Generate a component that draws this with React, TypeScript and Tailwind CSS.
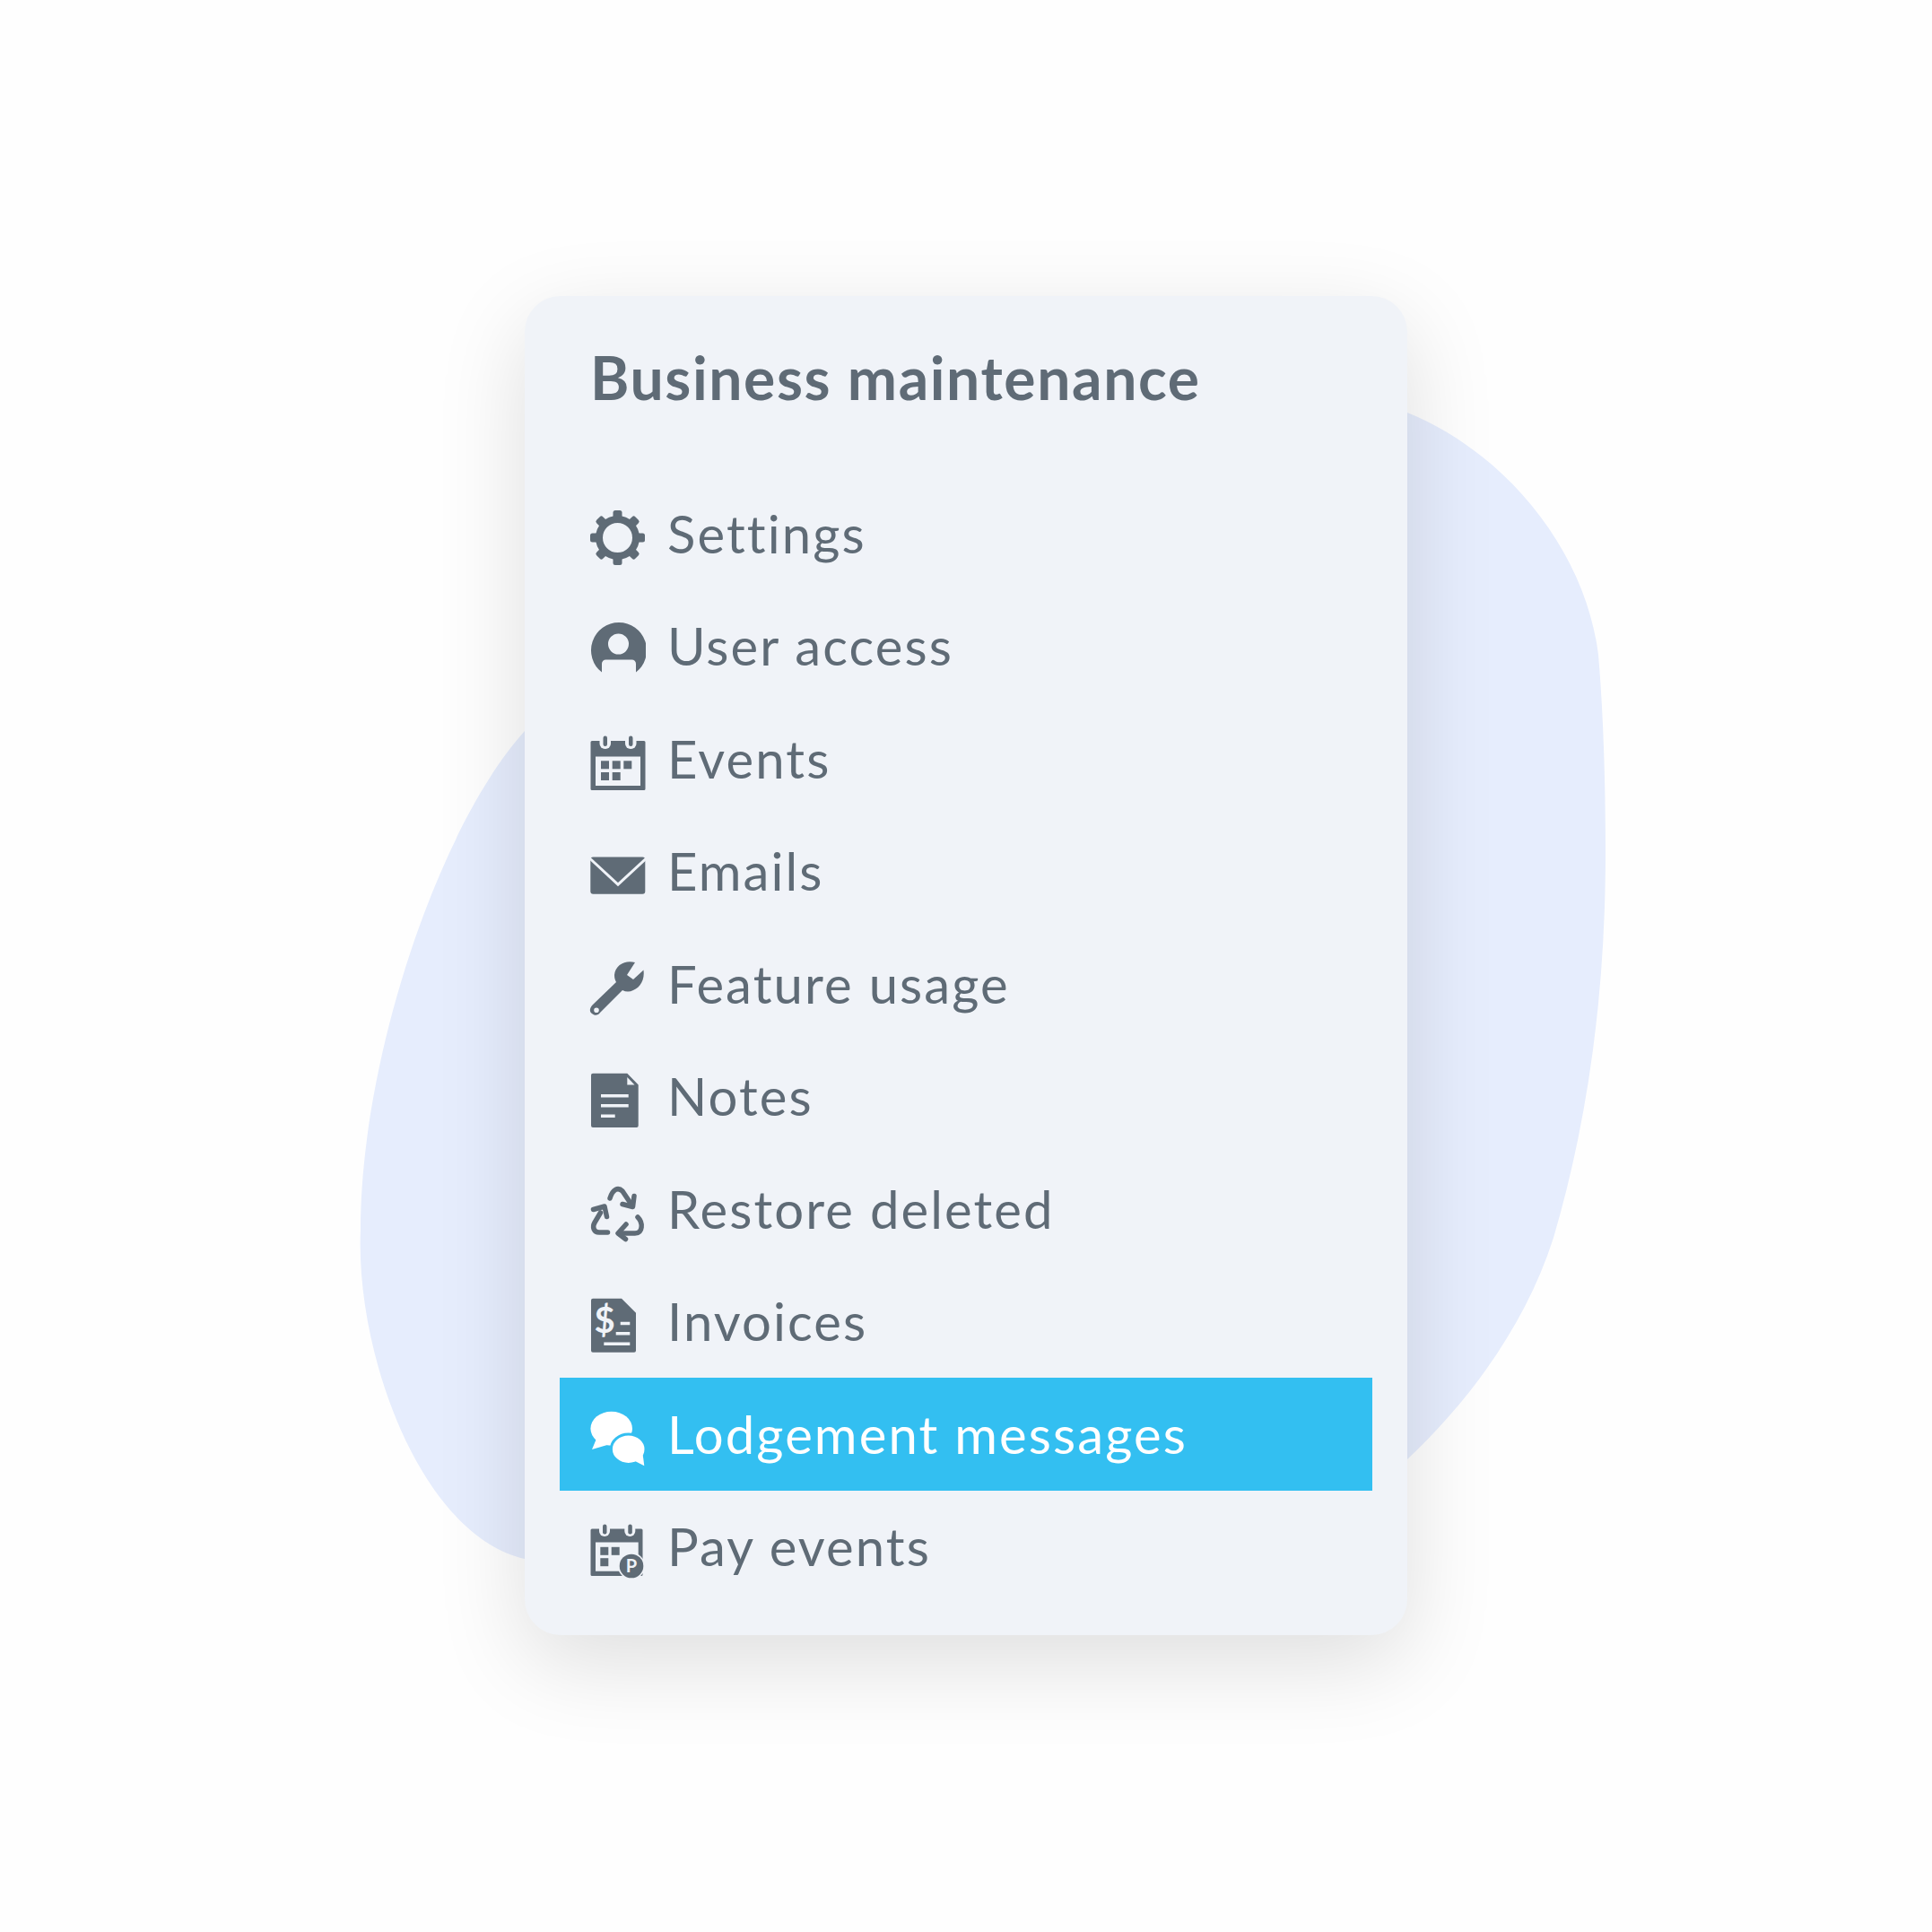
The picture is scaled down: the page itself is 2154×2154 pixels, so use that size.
const ink = "#5f6b76";

const Gear = () => (
  <g fill={ink}>
    <circle cx="32.5" cy="31.5" r="20.5" fill="none" stroke={ink} strokeWidth="8" />
    {[0, 45, 90, 135, 180, 225, 270, 315].map((a) => (
      <rect key={a} x="27.5" y="1" width="10" height="12" rx="2.5" transform={`rotate(${a} 32.5 31.5)`} />
    ))}
  </g>
);

const User = () => (
  <path
    fill={ink}
    fillRule="evenodd"
    d="M34 1a31 31 0 0 1 19 55.5V47a4.5 4.5 0 0 0-4.5-4.5h-29A4.500 4.500 0 0 0 15 47v9.500A31 31 0 0 1 34 1ZM33.500 13.500a11.500 11.500 0 1 0 0 23 11.500 11.500 0 0 0 0-23Z"
  />
);

const Calendar = () => (
  <g>
    <path fill={ink} fillRule="evenodd" d="M4 7h58a1.500 1.500 0 0 1 1.500 1.500V60.500a1.500 1.500 0 0 1-1.500 1.500H4a1.500 1.500 0 0 1-1.500-1.500V8.500A1.500 1.500 0 0 1 4 7ZM8 24.500V57H58V24.500Z" />
    <rect x="12.500" y="0" width="12.500" height="16" rx="6" fill="#f0f3f8" />
    <rect x="41" y="0" width="12.500" height="16" rx="6" fill="#f0f3f8" />
    <rect x="16.500" y="1.500" width="4.500" height="11.500" rx="2.200" fill={ink} />
    <rect x="45" y="1.500" width="4.500" height="11.500" rx="2.200" fill={ink} />
    <g fill={ink}>
      <rect x="14" y="29.300" width="9" height="9" />
      <rect x="26.700" y="29.300" width="9" height="9" />
      <rect x="39.300" y="29.300" width="9" height="9" />
      <rect x="14" y="42" width="9" height="9" />
      <rect x="26.700" y="42" width="9" height="9" />
    </g>
  </g>
);

const Mail = () => (
  <g>
    <rect x="2.300" y="11.500" width="61" height="41.300" rx="3" fill={ink} />
    <path d="M1 12.500 33 42.200 65 12.500" fill="none" stroke="#f0f3f8" strokeWidth="3" />
  </g>
);

const Wrench = () => (
  <path
    fill={ink}
    fillRule="evenodd"
    d="M52 3C42 0 30 5 29 17c0 4 1 6 2 8L5 50c-4 4-4 8-1 10 3 3 7 2 9-1l25-25c4 2 8 2 12 0 8-3 13-12 11.500-22.500L50 22l-7-5ZM9 53.500a2.800 2.800 0 1 1 0 5.600 2.800 2.800 0 0 1 0-5.600Z"
  />
);

const Note = () => (
  <g>
    <path fill={ink} d="M5 1.800H43.300L55.700 14.500V60a2 2 0 0 1-2 2H5a2 2 0 0 1-2-2V3.800a2 2 0 0 1 2-2Z" />
    <path fill="#f0f3f8" d="M43.300 6 51.500 14.500H43.300Z" />
    <path stroke="#f0f3f8" strokeWidth="3.500" d="M14 26.800H44.700M14 37.800H44.700M14 49.200H29.700" />
  </g>
);

const Recycle = () => (
  <g fill="none" stroke={ink} strokeWidth="5.500" strokeLinecap="round" strokeLinejoin="round">
    <path d="M24 15C27 5 33 2 38 7L48 22" />
    <path d="M51 12.500 49.500 24.500 38 21.500" />
    <path d="M21.500 53H12C6 53 4 47 7 42L13.500 31" />
    <path d="M5.500 27.500 18 24 20.500 35.500" />
    <path d="M55 36C61 42 61 54 52 54H34" />
    <path d="M42 44 33 54 41.500 60.500" />
  </g>
);

const Invoice = () => (
  <g>
    <path fill={ink} d="M5 1.800H37L53 17.800V59.800a2 2 0 0 1-2 2H5a2 2 0 0 1-2-2V3.800a2 2 0 0 1 2-2Z" />
    <text x="18" y="40" textAnchor="middle" fontFamily="Lato, sans-serif" fontWeight="700" fontSize="40" fill="#f0f3f8">$</text>
    <path stroke="#f0f3f8" strokeWidth="3.500" d="M35.700 29.500H46.300M30.700 40.800H46.300M17.300 52.200H46.300" />
  </g>
);

const Chat = () => (
  <g fill="#fff">
    <ellipse cx="25.700" cy="20.700" rx="23.300" ry="19" />
    <path d="M9 32 4 44 21 39Z" />
    <ellipse cx="44.700" cy="43.700" rx="19.300" ry="16.700" stroke="#33bff1" strokeWidth="3" />
    <path d="M52 57 62.300 62.300 60.700 50Z" />
  </g>
);

const PayCalendar = () => (
  <g>
    <path fill={ink} fillRule="evenodd" d="M4 7.500H59a1.500 1.500 0 0 1 1.500 1.500V58.500A1.500 1.500 0 0 1 59 60H4a1.500 1.500 0 0 1-1.500-1.500V9A1.500 1.500 0 0 1 4 7.500ZM8 22.500V54.800H55.700V22.500Z" />
    <rect x="12" y="1" width="12" height="15" rx="6" fill="#f0f3f8" />
    <rect x="40.300" y="1" width="12" height="15" rx="6" fill="#f0f3f8" />
    <rect x="16" y="2.500" width="4.500" height="11" rx="2.200" fill={ink} />
    <rect x="44.300" y="2.500" width="4.500" height="11" rx="2.200" fill={ink} />
    <g fill={ink}>
      <rect x="13.300" y="27.800" width="9" height="9" />
      <rect x="25.700" y="27.800" width="9" height="9" />
      <rect x="13.300" y="40.200" width="9" height="9" />
    </g>
    <circle cx="48" cy="49" r="15" fill="#f0f3f8" />
    <circle cx="48" cy="49" r="13.300" fill={ink} />
    <text x="48" y="56" textAnchor="middle" fontFamily="Lato, sans-serif" fontWeight="700" fontSize="20" fill="#f0f3f8">P</text>
  </g>
);

const rows = [
  { label: "Settings", icon: <Gear /> },
  { label: "User access", icon: <User /> },
  { label: "Events", icon: <Calendar /> },
  { label: "Emails", icon: <Mail /> },
  { label: "Feature usage", icon: <Wrench /> },
  { label: "Notes", icon: <Note /> },
  { label: "Restore deleted", icon: <Recycle /> },
  { label: "Invoices", icon: <Invoice /> },
  { label: "Lodgement messages", icon: <Chat />, active: true },
  { label: "Pay events", icon: <PayCalendar /> },
];

export default function App() {
  return (
    <div className="relative h-[2154px] w-[2154px] overflow-hidden bg-[#fefefe] pl-[585px] pt-[330px] font-['Lato',sans-serif]">
      {/* backdrop blob */}
      <svg className="absolute left-0 top-0" width="2154" height="2154" viewBox="0 0 2154 2154">
        <path
          fill="#e6edfd"
          d="M1569 460C1680 505 1768 615 1782 730C1788 800 1790 880 1790 950C1790 1110 1770 1250 1732 1380C1700 1480 1635 1565 1569 1627L1000 1700L585 1738C470 1712 396 1510 402 1371C402 1180 490 920 585 815L1000 600Z"
        />
      </svg>

      <div className="relative flex h-[1493px] w-[984px] flex-col rounded-[40px] bg-[#f0f3f8] px-[39px] shadow-[0_30px_100px_rgba(0,0,0,0.13)]">
        <h1 className="mb-[71px] ml-[34px] mt-[51px] h-[80px] text-[66px] font-bold leading-[80px] tracking-[1.6px] text-[#5f6b76]">
          Business maintenance
        </h1>
        <ul className="flex flex-col">
          {rows.map((row) => (
            <li
              key={row.label}
              className={
                row.active
                  ? "flex h-[125.5px] items-center bg-[#33bff1] pl-[32px] text-white"
                  : "flex h-[125.5px] items-center pl-[32px] text-[#5f6b76]"
              }
            >
              <svg className="mt-[10px] shrink-0" width="64" height="64" viewBox="0 0 64 64">
                {row.icon}
              </svg>
              <span className="ml-[24px] text-[58px] leading-none tracking-[2.1px]">{row.label}</span>
            </li>
          ))}
        </ul>
      </div>
    </div>
  );
}
